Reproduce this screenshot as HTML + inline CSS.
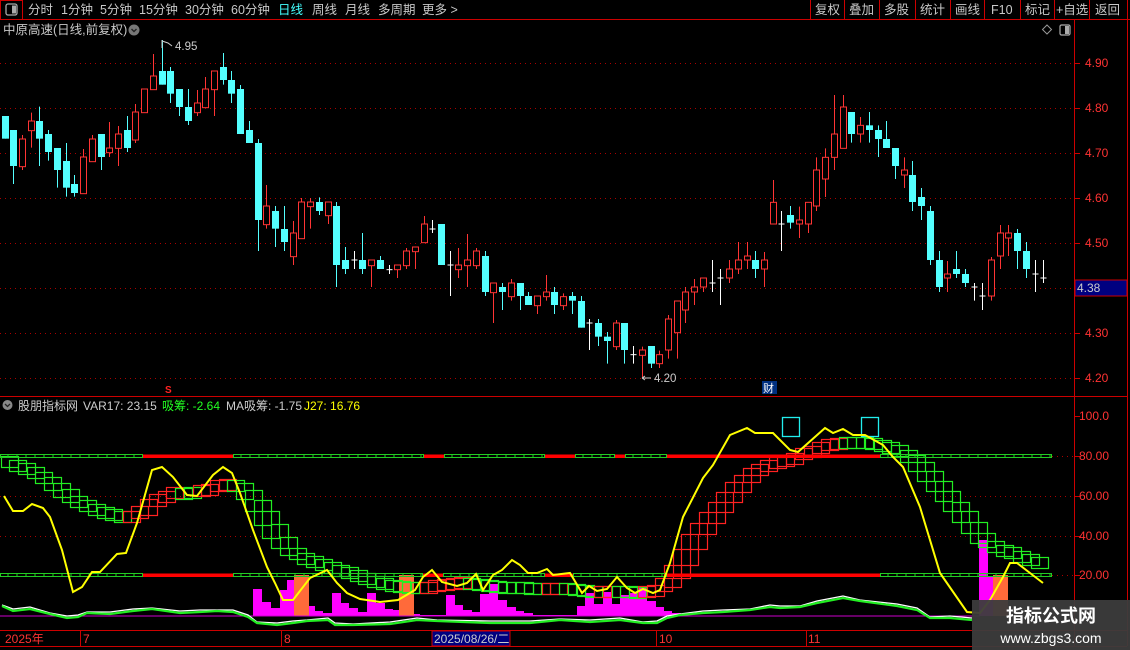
<!DOCTYPE html>
<html><head><meta charset="utf-8">
<style>
html,body{margin:0;padding:0;background:#000;width:1130px;height:650px;overflow:hidden}
svg{display:block}
text{font-family:"Liberation Sans","Noto Sans CJK SC",sans-serif}
</style></head>
<body>
<svg id="s" width="1130" height="650" xmlns="http://www.w3.org/2000/svg">
<rect width="1130" height="650" fill="#000"/>
<rect x="0.5" y="0.5" width="22" height="19" fill="none" stroke="#c00" />
<rect x="6" y="4" width="11" height="11" rx="2" fill="none" stroke="#aaa" stroke-width="1.3"/>
<rect x="12" y="5.5" width="4" height="8" fill="#aaa"/>
<line x1="0" y1="19.5" x2="1130" y2="19.5" stroke="#c00"/>
<g font-size="12.5" fill="#c8c8c8">
<text x="28" y="14">分时</text><text x="61" y="14">1分钟</text><text x="100" y="14">5分钟</text>
<text x="139" y="14">15分钟</text><text x="185" y="14">30分钟</text><text x="231" y="14">60分钟</text>
<text x="278" y="14" fill="#4ff">日线</text><text x="312" y="14">周线</text><text x="345" y="14">月线</text>
<text x="378" y="14">多周期</text><text x="422" y="14">更多 &gt;</text>
</g>
<g stroke="#c00"><line x1="810.5" y1="0" x2="810.5" y2="20"/><line x1="844.5" y1="0" x2="844.5" y2="20"/><line x1="879.5" y1="0" x2="879.5" y2="20"/><line x1="915.5" y1="0" x2="915.5" y2="20"/><line x1="950.5" y1="0" x2="950.5" y2="20"/><line x1="984.5" y1="0" x2="984.5" y2="20"/><line x1="1020.5" y1="0" x2="1020.5" y2="20"/><line x1="1054.5" y1="0" x2="1054.5" y2="20"/><line x1="1089.5" y1="0" x2="1089.5" y2="20"/><line x1="1127.5" y1="0" x2="1127.5" y2="20"/></g>
<g font-size="12.5" fill="#c8c8c8">
<text x="815" y="14">复权</text><text x="849" y="14">叠加</text><text x="884" y="14">多股</text><text x="920" y="14">统计</text><text x="955" y="14">画线</text><text x="991" y="14">F10</text><text x="1025" y="14">标记</text><text x="1056" y="14">+自选</text><text x="1095" y="14">返回</text>
</g>
<text x="3" y="34" font-size="12.5" fill="#c8c8c8">中原高速(日线,前复权)</text>
<circle cx="134" cy="30" r="5.5" fill="#777"/><path d="M131.5 29 L134 31.5 L136.5 29" stroke="#222" fill="none" stroke-width="1.4"/>
<path d="M1047 25 L1051.5 29.5 L1047 34 L1042.5 29.5 Z" fill="none" stroke="#999"/>
<rect x="1060" y="25" width="10" height="10" rx="1.5" fill="none" stroke="#aaa" stroke-width="1.2"/><rect x="1065" y="26" width="4" height="8" fill="#aaa"/>
<line x1="1074.5" y1="20" x2="1074.5" y2="646" stroke="#c00"/>
<line x1="1127.5" y1="20" x2="1127.5" y2="646" stroke="#c00"/>
<line x1="0" y1="396.5" x2="1127" y2="396.5" stroke="#c00"/>
<line x1="0" y1="630.5" x2="1127" y2="630.5" stroke="#c00"/>
<line x1="0" y1="646.5" x2="1127" y2="646.5" stroke="#c00"/>
<g id="grid"></g>
<g font-size="12" fill="#f33">
<text x="1085" y="67">4.90</text><text x="1085" y="112">4.80</text><text x="1085" y="157">4.70</text><text x="1085" y="202">4.60</text><text x="1085" y="247">4.50</text><text x="1085" y="337">4.30</text><text x="1085" y="382">4.20</text>
<text x="1079" y="420">100.0</text><text x="1079" y="460">80.00</text><text x="1079" y="500">60.00</text><text x="1079" y="540">40.00</text><text x="1079" y="579">20.00</text>
</g>
<rect x="1075" y="280" width="52" height="16" fill="#000080" stroke="#c00"/>
<text x="1077" y="292" font-size="12" fill="#ccc">4.38</text>
<g id="cand"></g>
<path d="M162 48 V40 M162 41 L168 43 L172 46" stroke="#ccc" fill="none"/>
<text x="175" y="50" font-size="11.5" fill="#ccc">4.95</text>
<path d="M642 378 H651 M642 378 l3 -2 M642 378 l3 2" stroke="#ccc" fill="none"/>
<text x="654" y="382" font-size="11.5" fill="#ccc">4.20</text>
<text x="165" y="393" font-size="10" fill="#f22" font-weight="bold">S</text>
<rect x="762" y="381" width="15" height="13" fill="#003080"/>
<text x="763" y="392" font-size="11" fill="#fff">财</text>
<circle cx="7.5" cy="405" r="5" fill="#888"/><path d="M5 404 L7.5 406.5 L10 404" stroke="#222" fill="none" stroke-width="1.3"/>
<g font-size="12" fill="#ccc">
<text x="18" y="410">股朋指标网</text><text x="83" y="410">VAR17: 23.15</text>
<text x="162" y="410" fill="#2f2">吸筹: -2.64</text>
<text x="226" y="410">MA吸筹: -1.75</text>
<text x="304" y="410" fill="#ff0">J27: 16.76</text>
</g>
<g id="ind"></g>
<g font-size="12" fill="#f33">
<text x="5" y="643">2025年</text><text x="83" y="643">7</text><text x="284" y="643">8</text><text x="659" y="643">10</text><text x="808" y="643">11</text>
</g>
<g stroke="#c00"><line x1="80.5" y1="630" x2="80.5" y2="646"/><line x1="281.5" y1="630" x2="281.5" y2="646"/><line x1="656.5" y1="630" x2="656.5" y2="646"/><line x1="806.5" y1="630" x2="806.5" y2="646"/></g>
<rect x="432" y="631" width="78" height="15" fill="#000080" stroke="#c00"/>
<text x="434" y="643" font-size="12" fill="#ccc">2025/08/26/二</text>
<rect x="972" y="600" width="158" height="50" fill="#3c3c3c" opacity="0.95"/>
<text x="1051" y="622" font-size="18" font-weight="bold" fill="#fff" text-anchor="middle" font-family="Noto Sans CJK SC,sans-serif">指标公式网</text>
<text x="1051" y="643" font-size="14" fill="#fff" text-anchor="middle">www.zbgs3.com</text>
</svg>
<script>
(function(){
var NS="http://www.w3.org/2000/svg";
function el(p,t,a){var e=document.createElementNS(NS,t);for(var k in a)e.setAttribute(k,a[k]);p.appendChild(e);return e;}
var grid=document.getElementById("grid");
[63,108,153,198,243,288,333,378].forEach(function(y){el(grid,"line",{x1:0,y1:y+.5,x2:1074,y2:y+.5,stroke:"#a00","stroke-dasharray":"1 4"});el(grid,"line",{x1:1074,y1:y+.5,x2:1080,y2:y+.5,stroke:"#c00"});});
[496,536].forEach(function(y){el(grid,"line",{x1:0,y1:y+.5,x2:1074,y2:y+.5,stroke:"#a00","stroke-dasharray":"1 4"});});
[456,575].forEach(function(y){el(grid,"line",{x1:1052,y1:y+.5,x2:1074,y2:y+.5,stroke:"#a00","stroke-dasharray":"1 4"});});
[416,456,496,536,575].forEach(function(y){el(grid,"line",{x1:1074,y1:y+.5,x2:1080,y2:y+.5,stroke:"#c00"});});
var p1=[["c",228,296,228,296],["c",270,378,270,432],["r",297,380,285,390],["r",243,272,218,323],["c",243,296,200,378],["c",282,336,270,362],["c",324,390,324,443],["c",363,443,309,470],["c",432,459,405,470],["r",351,461,327,461],["r",297,365,285,365],["c",282,351,282,390],["r",324,338,246,351],["r",282,325,258,378],["c",270,324,228,336],["r",216,300,192,309],["r",147,218,147,218],["r",108,149,42,149],["c",93,134,0,134],["c",93,161,81,189],["c",147,201,147,228],["c",201,243,147,255],["r",189,218,150,228],["r",147,203,111,203],["r",93,149,93,228],["c",81,120,39,134],["c",120,161,93,189],["c",147,282,135,282],["c",270,309,243,309],["c",309,540,297,633],["r",498,554,435,566],["c",513,566,498,621],["c",567,606,498,633],["r",579,650,543,675],["r",486,596,474,596],["r",486,500,474,566],["c",486,513,472,525],["r",486,527,486,552],["c",498,675,486,741],["c",660,687,621,702],["w",660,660,633,687],["c",660,687,579,702],["r",660,677,660,741],["c",660,687,648,687],["w",689,689,675,702],["r",675,689,675,714],["r",633,677,624,687],["r",621,635,621,687],["r",552,608,528,608],["w",567,567,540,579],["c",552,675,552,675],["w",675,675,633,768],["r",675,689,624,714],["r",660,677,582,741],["r",633,677,624,687],["c",648,756,633,768],["r",729,758,729,849],["c",741,756,729,810],["r",729,770,717,782],["c",729,768,729,810],["c",768,795,756,795],["r",768,797,768,822],
["r",756,770,705,782],["c",756,795,741,822],["r",770,797,760,810],["c",768,782,756,822],["c",783,863,768,863],["w",849,849,837,930],["c",849,890,837,918],["c",890,903,876,971],["r",849,920,840,930],["c",849,930,849,971],["w",944,944,918,971],["r",930,946,920,1012],["c",918,971,918,984],["r",944,971,932,984],["r",837,930,825,956],["r",783,878,783,956],["r",756,810,741,849],["r",741,756,717,795],["r",714,741,714,756],["w",729,729,660,756],["w",714,714,687,795],["r",687,714,660,729],["r",660,687,606,702],["r",648,660,606,687],["c",660,687,633,714],["r",660,687,636,741],["r",487,552,420,552],["w",552,552,513,633],["c",525,548,498,566],["r",540,552,500,594],["r",487,552,487,579],["r",390,498,352,513],["r",352,417,325,471],["r",282,352,165,390],["r",201,325,165,325],["c",216,282,216,308],["r",256,282,231,308],["c",256,270,216,308],["c",270,297,256,351],["c",297,324,243,324],["c",324,378,324,417],["r",390,405,352,444],["c",405,486,363,513],["c",471,498,444,540],["c",513,660,498,675],["c",660,741,633,756],["r",702,714,663,756],["c",687,702,633,714],["c",702,729,687,741],["w",741,741,729,782],["w",768,768,729,810],["r",660,768,651,782],["r",579,648,555,687],["r",579,594,555,648],["c",579,633,567,687],["c",633,687,606,714],["w",702,702,660,756],["w",714,714,660,729]];
var cg=document.getElementById("cand");
function X(i){return 4.5+8.73*i;}
p1.forEach(function(d,i){
 var x=Math.round(X(i))+.5,c=d[0],bt=40+d[1]/3,bb=40+d[2]/3,wt=40+d[3]/3,wb=40+d[4]/3;
 var col=c=="c"?"#54ffff":c=="r"?"#ff3434":"#fff";
 if(c=="w"){el(cg,"line",{x1:x,y1:wt,x2:x,y2:wb,stroke:col});el(cg,"line",{x1:x-3,y1:bt,x2:x+3,y2:bt,stroke:col});return;}
 el(cg,"line",{x1:x,y1:wt,x2:x,y2:wb,stroke:col});
 if(c=="c")el(cg,"rect",{x:x-3.5,y:bt,width:7,height:Math.max(bb-bt,1),fill:col});
 else el(cg,"rect",{x:x-3,y:bt,width:6,height:Math.max(bb-bt,1),fill:"#000",stroke:col});
});
var ig=document.getElementById("ind");
var mb=[[253,262,589],[262,271,602],[271,280,608],[280,287,590],[287,294,580],[309,315,606],[315,323,611],[323,332,613],[332,341,593],[341,349,603],[349,358,608],[358,367,612],[367,376,593],[376,385,603],[385,393,609],[393,399,610],[399,420,614],[420,446,615],[446,455,595],[455,463,605],[463,472,610],[472,480,612],[480,489,594],[489,498,584],[498,507,600],[507,516,607],[516,524,611],[524,533,613],[533,577,615],[577,585,606],[585,594,593],[594,603,604],[603,612,592],[612,620,604],[620,629,595],[629,638,593],[638,647,587],[647,656,601],[656,664,607],[664,672,611],[672,681,613],[979,988,540],[988,993,577]];
mb.forEach(function(b){el(ig,"rect",{x:b[0],y:b[2],width:b[1]-b[0],height:616-b[2],fill:"#f0f"});});
[[294,309],[399,414],[993,1008]].forEach(function(b){el(ig,"rect",{x:b[0],y:575,width:b[1]-b[0],height:41,fill:"#ff6a3a"});});
function hl(y,reds){var segs=[];var pos=0;reds.forEach(function(r){segs.push([pos,r[0],"g"]);segs.push([r[0],r[1],"r"]);pos=r[1];});segs.push([pos,1052,"g"]);
 segs.forEach(function(s){if(s[1]<=s[0])return;if(s[2]=="r")el(ig,"rect",{x:s[0],y:y-1.5,width:s[1]-s[0],height:3.5,fill:"#f00"});else{el(ig,"rect",{x:s[0]+.5,y:y-1.5,width:s[1]-s[0]-1,height:3,fill:"none",stroke:"#2c2","stroke-width":1});for(var t=s[0]+8;t<s[1];t+=9)el(ig,"line",{x1:t,y1:y-1.5,x2:t,y2:y+1.5,stroke:"#2c2"});}});}
var T=[[0,458],[15,464],[30,470],[45,477],[55,484],[65,492],[75,500],[90,507],[110,514],[130,518],[140,516],[150,505],[165,494],[185,492],[200,494],[215,486],[230,481],[240,485],[250,495],[262,510],[275,530],[285,545],[300,557],[320,563],[340,570],[360,576],[380,583],[400,586],[420,589],[440,585],[470,582],[500,588],[520,587],[545,590],[570,587],[590,592],[620,591],[650,594],[667,585],[677,573],[687,555],[695,540],[703,528],[712,518],[720,507],[730,497],[738,487],[747,478],[755,472],[765,465],[775,463],[785,462],[795,458],[805,455],[815,448],[825,446],[835,443],[845,442],[870,443],[885,445],[895,448],[905,453],[913,458],[922,467],[930,476],[940,487],[948,497],[957,507],[966,517],[975,529],[983,539],[992,547],[1000,548],[1009,552],[1018,554],[1026,557],[1035,561],[1045,565]];
function ti(x){for(var k=0;k<T.length-1;k++){if(x<=T[k+1][0]){var a=T[k],b=T[k+1];return a[1]+(b[1]-a[1])*(x-a[0])/(b[0]-a[0]);}}return T[T.length-1][1];}
for(var i=0;i<120;i++){var bx=X(i)-4;if(bx>1038)break;var a=ti(bx),b=ti(bx+17.5);var bt=Math.min(a,b),bb=Math.max(a,b);if(bb-bt<11){var m=(a+b)/2;bt=m-5.5;bb=m+5.5;}
 var col=(b<a-0.5)?"#f22":"#2e2";el(ig,"rect",{x:Math.round(bx)+.5,y:Math.round(bt)+.5,width:17,height:Math.round(bb-bt),fill:"none",stroke:col,"stroke-width":1.2});}
hl(456,[[143,233],[424,444],[545,575],[615,625],[667,880]]);
hl(575,[[143,233],[423,443],[545,573],[667,880]]);
el(ig,"rect",{x:782.5,y:417.5,width:17,height:19,fill:"none",stroke:"#2ee","stroke-width":1.3});
el(ig,"rect",{x:861.5,y:417.5,width:17,height:19,fill:"none",stroke:"#2ee","stroke-width":1.3});
el(ig,"line",{x1:0,y1:616,x2:980,y2:616,stroke:"#c0c","stroke-width":1});
var G=[[2,606],[13,611],[30,609],[50,614],[67,618],[78,617],[87,613],[110,614],[133,611],[152,609],[180,613],[200,612],[217,611],[233,612],[248,617],[257,623],[277,625],[293,623],[307,621],[328,620],[335,625],[353,625],[390,624],[417,620],[437,621],[490,623],[530,623],[560,620],[590,622],[620,620],[643,623],[657,623],[667,618],[680,615],[703,613],[723,612],[750,610],[770,607],[780,608],[800,607],[817,603],[843,598],[860,601],[897,606],[917,610],[930,618],[950,618],[972,620]];
var pw=G.map(function(p,k){return p[0]+","+(p[1]-2+(k%3==0?1:0));}).join(" ");
el(ig,"polyline",{points:pw,fill:"none",stroke:"#fff","stroke-width":1.3});
el(ig,"polyline",{points:G.map(function(p){return p.join(",");}).join(" "),fill:"none",stroke:"#2e2","stroke-width":2.2});
var Y=[[4,496],[13,511],[23,511],[32,504],[43,508],[50,517],[62,550],[73,592],[82,587],[92,572],[100,572],[117,554],[126,553],[137,523],[152,470],[162,467],[173,477],[187,495],[197,496],[213,475],[223,467],[232,473],[240,493],[253,530],[267,567],[275,583],[283,600],[293,600],[310,578],[327,570],[337,583],[347,593],[360,599],[380,602],[398,600],[415,590],[423,577],[432,570],[442,582],[457,586],[467,583],[476,574],[483,590],[493,575],[502,570],[512,560],[520,565],[528,573],[537,573],[547,569],[553,575],[570,573],[582,593],[589,586],[597,591],[607,589],[617,577],[627,588],[635,593],[643,589],[653,593],[660,590],[670,563],[683,517],[703,478],[713,465],[730,435],[747,428],[755,433],[773,433],[790,450],[798,452],[825,428],[833,433],[843,429],[853,435],[865,435],[883,445],[893,457],[903,467],[920,507],[940,573],[967,612],[980,613],[990,600],[1003,577],[1010,563],[1017,563],[1030,573],[1043,583]];
el(ig,"polyline",{points:Y.map(function(p){return p.join(",");}).join(" "),fill:"none",stroke:"#ff0","stroke-width":2});
})();
</script>
</body></html>
